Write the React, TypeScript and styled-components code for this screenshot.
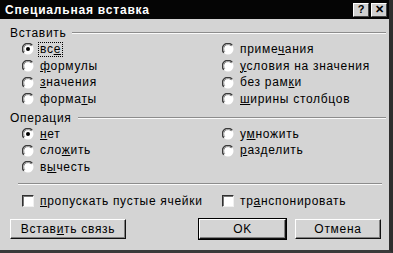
import React from 'react'
import styled, { createGlobalStyle } from 'styled-components'

const Global = createGlobalStyle`
    html, body {
        margin: 0;
        padding: 0;
        background: #d4d4d4;
    }
    body {
        font-family: 'Liberation Sans', Arial, sans-serif;
        font-size: 12px;
        letter-spacing: 0.7px;
        color: #000;
    }
`

const Window = styled.div`
    width: 393px;
    height: 253px;
    box-sizing: border-box;
    background: #d4d4d4;
    border-right: 4px solid #2e2e2e;
    border-bottom: 3px solid #3a3a3a;
    display: flex;
    flex-direction: column;
    overflow: hidden;
`

const TitleBar = styled.div`
    height: 19px;
    flex: none;
    background: #050505;
    display: flex;
    align-items: center;
    padding: 0 2px 0 5px;
`

const Title = styled.div`
    flex: 1;
    color: #fff;
    font-weight: bold;
    font-size: 12px;
    letter-spacing: 0.8px;
`

const TitleButton = styled.div`
    width: 16px;
    height: 14px;
    margin-left: 2px;
    box-sizing: border-box;
    background: #d0d0d0;
    border: 1px solid;
    border-color: #fff #444 #444 #fff;
    display: flex;
    align-items: center;
    justify-content: center;
    font-weight: bold;
    font-size: 11px;
    letter-spacing: 0;
    line-height: 1;
    color: #000;
`

const Body = styled.div`
    flex: 1;
    padding: 7px 3px 0 10px;
    display: flex;
    flex-direction: column;
`

const GroupHeader = styled.div`
    display: flex;
    align-items: center;
    height: 14px;
`

const Rule = styled.div`
    flex: 1;
    margin-left: 6px;
    border-top: 1px solid #8c8c8c;
    border-bottom: 1px solid #fafafa;
`

const OptionGrid = styled.div<{ rows: number }>`
    display: grid;
    grid-template-columns: 200px 1fr;
    grid-template-rows: repeat(${(p) => p.rows}, 16.7px);
    grid-auto-flow: column;
    padding-left: 12px;
    margin-top: 1px;
    margin-bottom: 3px;
`

const Option = styled.div`
    display: flex;
    align-items: center;
    white-space: nowrap;
`

const Label = styled.span<{ focused?: boolean }>`
    margin-left: 4px;
    padding: 0 1px;
    border: 1px dotted ${(p) => (p.focused ? '#000' : 'transparent')};
    line-height: 13px;
`

const Key = styled.span`
    text-decoration: underline;
`

const Separator = styled.div`
    margin: 4px 4px 0 8px;
    border-top: 1px solid #8c8c8c;
    border-bottom: 1px solid #fafafa;
`

const CheckRow = styled.div`
    display: grid;
    grid-template-columns: 200px 1fr;
    padding-left: 12px;
    margin-top: 9px;
    height: 14px;
    align-items: center;
`

const Box = styled.div`
    width: 12px;
    height: 12px;
    box-sizing: border-box;
    background: #fff;
    border: 1px solid;
    border-color: #303030 #f0f0f0 #f0f0f0 #303030;
    box-shadow: inset 1px 1px 0 #777;
    flex: none;
`

const ButtonRow = styled.div`
    display: flex;
    align-items: center;
    margin-top: 11px;
    padding-right: 5px;
`

const Button = styled.div<{ primary?: boolean; w: number; gap?: number }>`
    width: ${(p) => p.w}px;
    height: 20px;
    margin-left: ${(p) => p.gap ?? 0}px;
    box-sizing: border-box;
    background: #d4d4d4;
    display: flex;
    align-items: center;
    justify-content: center;
    border: 1px solid;
    border-color: #fff #111 #111 #fff;
    box-shadow: inset -1px -1px 0 #808080;
    outline: ${(p) => (p.primary ? '1px solid #000' : 'none')};
`

const Spacer = styled.div`
    flex: 1;
`

function Radio({ checked }: { checked?: boolean }) {
    return (
        <svg width="12" height="12" viewBox="0 0 12 12" style={{ flex: 'none' }}>
            <circle cx="6" cy="6" r="5.5" fill="#fff" />
            <path d="M10.2 2.2 A5.3 5.3 0 0 0 1.8 9.8" fill="none" stroke="#3a3a3a" strokeWidth="1.4" />
            <path d="M9.2 3 A4.2 4.2 0 0 0 2.8 8.8" fill="none" stroke="#8a8a8a" strokeWidth="1" />
            {checked && <circle cx="6" cy="6" r="2" fill="#000" />}
        </svg>
    )
}

type Opt = { pre: string; key: string; post: string; checked?: boolean; focused?: boolean }

const pasteOpts: Opt[] = [
    { pre: 'вс', key: 'е', post: '', checked: true, focused: true },
    { pre: '', key: 'ф', post: 'ормулы' },
    { pre: '', key: 'з', post: 'начения' },
    { pre: 'форма', key: 'т', post: 'ы' },
    { pre: 'приме', key: 'ч', post: 'ания' },
    { pre: '', key: 'у', post: 'словия на значения' },
    { pre: 'без рам', key: 'к', post: 'и' },
    { pre: '', key: 'ш', post: 'ирины столбцов' },
]

const opOpts: (Opt | null)[] = [
    { pre: '', key: 'н', post: 'ет', checked: true },
    { pre: 'сло', key: 'ж', post: 'ить' },
    { pre: 'в', key: 'ы', post: 'честь' },
    { pre: 'у', key: 'м', post: 'ножить' },
    { pre: '', key: 'р', post: 'азделить' },
    null,
]

function OptionItem({ o }: { o: Opt }) {
    return (
        <Option>
            <Radio checked={o.checked} />
            <Label focused={o.focused}>
                {o.pre}
                <Key>{o.key}</Key>
                {o.post}
            </Label>
        </Option>
    )
}

export default function App() {
    return (
        <Window>
            <Global />
            <TitleBar>
                <Title>Специальная вставка</Title>
                <TitleButton>?</TitleButton>
                <TitleButton>✕</TitleButton>
            </TitleBar>
            <Body>
                <GroupHeader>
                    Вставить
                    <Rule />
                </GroupHeader>
                <OptionGrid rows={4}>
                    {pasteOpts.map((o, i) => (
                        <OptionItem key={i} o={o} />
                    ))}
                </OptionGrid>
                <GroupHeader>
                    Операция
                    <Rule />
                </GroupHeader>
                <OptionGrid rows={3}>
                    {opOpts.map((o, i) => (o ? <OptionItem key={i} o={o} /> : <div key={i} />))}
                </OptionGrid>
                <Separator />
                <CheckRow>
                    <Option>
                        <Box />
                        <Label>
                            <Key>п</Key>ропускать пустые ячейки
                        </Label>
                    </Option>
                    <Option>
                        <Box />
                        <Label>
                            тр<Key>а</Key>нспонировать
                        </Label>
                    </Option>
                </CheckRow>
                <ButtonRow>
                    <Button w={116}>
                        <span>
                            Встав<Key>и</Key>ть связь
                        </span>
                    </Button>
                    <Spacer />
                    <Button primary w={87}>OK</Button>
                    <Button w={86} gap={9}>Отмена</Button>
                </ButtonRow>
            </Body>
        </Window>
    )
}
